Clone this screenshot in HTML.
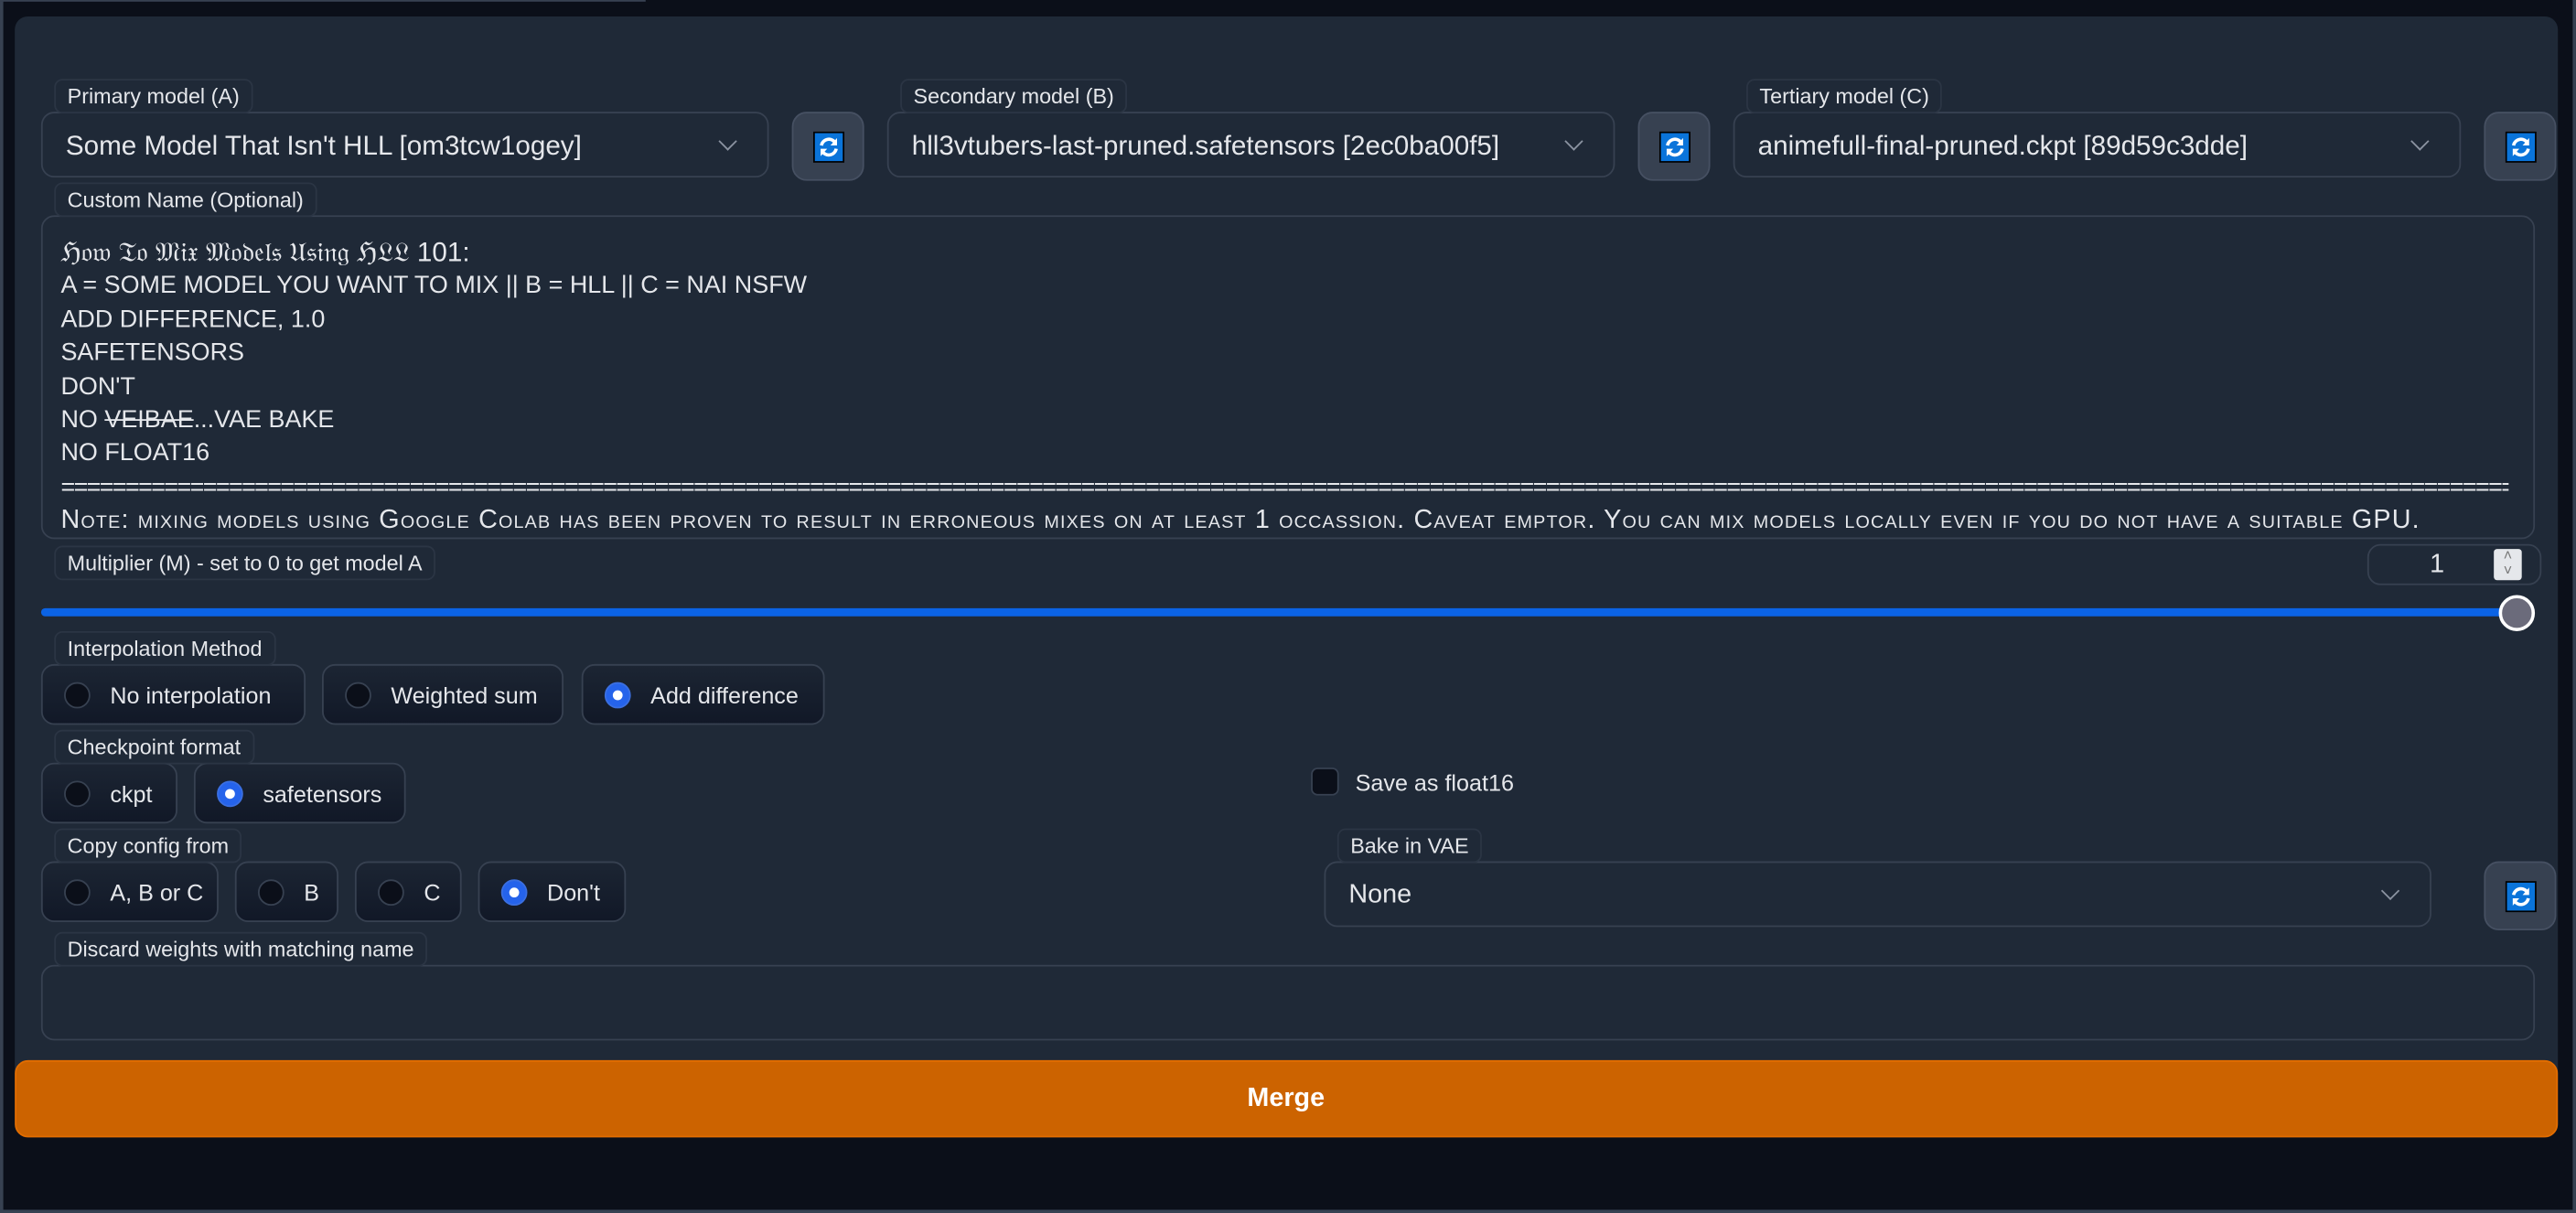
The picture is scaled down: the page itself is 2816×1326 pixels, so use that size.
<!DOCTYPE html>
<html><head><meta charset="utf-8"><style>
*{box-sizing:border-box;margin:0;padding:0}
html,body{width:2816px;height:1326px;overflow:hidden;background:#0b0f19}
#w{position:absolute;left:0;top:0;width:1568px;height:738px;transform:scale(1.7959,1.7968);transform-origin:0 0;font-family:"Liberation Sans",sans-serif;color:#e5e7eb;background:#0b0f19}
.a{position:absolute}
.lbl{position:absolute;height:21px;padding:0 7px;font-size:13px;line-height:20px;color:#e5e7eb;background:#1f2937;border:1px solid #2b3544;border-radius:5px;z-index:2}
.dd{position:absolute;height:40px;border:1px solid #374151;border-radius:8px;background:#1f2937;font-size:16px;line-height:40px;padding-left:14px;color:#e5e7eb}
.dd:after{content:"";position:absolute;right:20px;top:13px;width:7px;height:7px;border-right:1.5px solid #8b93a1;border-bottom:1.5px solid #8b93a1;transform:rotate(45deg)}
.rb{position:absolute;width:44px;height:42px;background:#374151;border:1px solid #465062;border-radius:9px}
.rb svg{position:absolute;left:12px;top:11px}
.rad{position:absolute;height:37px;border:1px solid #374151;border-radius:8px;background:linear-gradient(#1c2533,#111827);font-size:14px;line-height:37px;padding-left:41px;color:#e5e7eb}
.rad:before{content:"";position:absolute;left:13px;top:10px;width:14px;height:14px;border-radius:50%;border:1px solid #374151;background:#0b0f19}
.rad.on:before{background:#2563eb;border-color:#3b6fe0}
.rad.on:after{content:"";position:absolute;left:18px;top:15px;width:6px;height:6px;border-radius:50%;background:#fff}
.box{position:absolute;border:1px solid #374151;border-radius:8px;background:#1f2937}
</style></head><body><div id="w">
<div class="a" style="left:0;top:0;width:2px;height:738px;background:#374151"></div>
<div class="a" style="left:0;top:0;width:393px;height:1px;background:#374151"></div>
<div class="a" style="left:1566px;top:0;width:2px;height:738px;background:#374151"></div>
<div class="a" style="left:0;top:736px;width:1568px;height:2px;background:#374151"></div>
<div class="a" style="left:8.5px;top:9.5px;width:1548.5px;height:682px;background:#1f2937;border-radius:8px 8px 8px 8px"></div>

<svg width="0" height="0" style="position:absolute"><defs><g id="ri"><rect x="0.5" y="0.5" width="18" height="18" fill="#0a74da" stroke="#000" stroke-width="1"/><path d="M5 8.5 A4.6 4.6 0 0 1 13.5 7" fill="none" stroke="#fff" stroke-width="2"/><path d="M14.5 4 L14.5 8.5 L10.5 8.5 Z" fill="#fff"/><path d="M14 10.5 A4.6 4.6 0 0 1 5.5 12" fill="none" stroke="#fff" stroke-width="2"/><path d="M4.5 15 L4.5 10.5 L8.5 10.5 Z" fill="#fff"/></g></defs></svg>

<div class="lbl" style="left:33px;top:48px">Primary model (A)</div>
<div class="dd" style="left:25px;top:68px;width:443px;font-size:16.5px">Some Model That Isn't HLL [om3tcw1ogey]</div>
<div class="rb" style="left:482px;top:68px"><svg width="19" height="19"><use href="#ri"/></svg></div>
<div class="lbl" style="left:548px;top:48px">Secondary model (B)</div>
<div class="dd" style="left:540px;top:68px;width:443px;font-size:16.5px">hll3vtubers-last-pruned.safetensors [2ec0ba00f5]</div>
<div class="rb" style="left:997px;top:68px"><svg width="19" height="19"><use href="#ri"/></svg></div>
<div class="lbl" style="left:1063px;top:48px">Tertiary model (C)</div>
<div class="dd" style="left:1055px;top:68px;width:443px;font-size:16.5px">animefull-final-pruned.ckpt [89d59c3dde]</div>
<div class="rb" style="left:1512px;top:68px"><svg width="19" height="19"><use href="#ri"/></svg></div>

<div class="lbl" style="left:33px;top:111px">Custom Name (Optional)</div>
<div class="box" style="left:25px;top:131px;width:1518px;height:197px"></div>
<div class="a" style="left:37px;top:144px;width:1490px;font-size:15px;line-height:20.4px;color:#e5e7eb;white-space:nowrap;overflow:hidden">
<div style="font-size:16.5px">ℌ𝔬𝔴 𝔗𝔬 𝔐𝔦𝔵 𝔐𝔬𝔡𝔢𝔩𝔰 𝔘𝔰𝔦𝔫𝔤 ℌ𝔏𝔏 101:</div>
<div>A = SOME MODEL YOU WANT TO MIX || B = HLL || C = NAI NSFW</div>
<div>ADD DIFFERENCE, 1.0</div>
<div>SAFETENSORS</div>
<div>DON'T</div>
<div>NO <s>VEIBAE</s>...VAE BAKE</div>
<div>NO FLOAT16</div>
<div style="letter-spacing:-0.9px">================================================================================================================================================================================================</div>
<div style="font-variant:small-caps;font-size:16px;letter-spacing:0.65px">Note: mixing models using Google Colab has been proven to result in erroneous mixes on at least 1 occassion. Caveat emptor. You can mix models locally even if you do not have a suitable GPU.</div>
</div>

<div class="lbl" style="left:33px;top:332px">Multiplier (M) - set to 0 to get model A</div>
<div class="box" style="left:1441px;top:331px;width:106px;height:25px;background:#1f2937"></div>
<div class="a" style="left:1479px;top:333px;font-size:16px;line-height:22px">1</div>
<div class="a" style="left:1518px;top:334px;width:17px;height:19px;background:#e5e7eb;border-radius:2px;font-size:9px;color:#777;text-align:center;line-height:9px">˄<br>˅</div>
<div class="a" style="left:25px;top:370px;width:1507px;height:5px;background:#0b63e5;border-radius:3px"></div>
<div class="a" style="left:1521px;top:362px;width:22px;height:22px;border-radius:50%;background:#6b6b7b;border:2.5px solid #fff"></div>

<div class="lbl" style="left:33px;top:384px">Interpolation Method</div>
<div class="rad" style="left:25px;top:404px;width:161px">No interpolation</div>
<div class="rad" style="left:196px;top:404px;width:147px">Weighted sum</div>
<div class="rad on" style="left:354px;top:404px;width:148px">Add difference</div>

<div class="lbl" style="left:33px;top:444px">Checkpoint format</div>
<div class="rad" style="left:25px;top:464px;width:83px">ckpt</div>
<div class="rad on" style="left:118px;top:464px;width:129px">safetensors</div>
<div class="a" style="left:798px;top:467px;width:17px;height:17px;border:1px solid #374151;border-radius:4px;background:#0b0f19"></div>
<div class="a" style="left:825px;top:466px;font-size:14px;line-height:20px">Save as float16</div>

<div class="lbl" style="left:33px;top:504px">Copy config from</div>
<div class="rad" style="left:25px;top:524px;width:108px">A, B or C</div>
<div class="rad" style="left:143px;top:524px;width:63px">B</div>
<div class="rad" style="left:216px;top:524px;width:65px">C</div>
<div class="rad on" style="left:291px;top:524px;width:90px">Don't</div>

<div class="lbl" style="left:814px;top:504px">Bake in VAE</div>
<div class="dd" style="left:806px;top:524px;width:674px">None</div>
<div class="rb" style="left:1512px;top:524px"><svg width="19" height="19"><use href="#ri"/></svg></div>

<div class="lbl" style="left:33px;top:567px">Discard weights with matching name</div>
<div class="box" style="left:25px;top:587px;width:1518px;height:46px"></div>

<div class="a" style="left:8.5px;top:645px;width:1548.5px;height:47px;background:#cc6300;border:1px solid #e26d00;border-radius:8px;font-size:16px;font-weight:bold;color:#fff;text-align:center;line-height:45px">Merge</div>
</div></body></html>
